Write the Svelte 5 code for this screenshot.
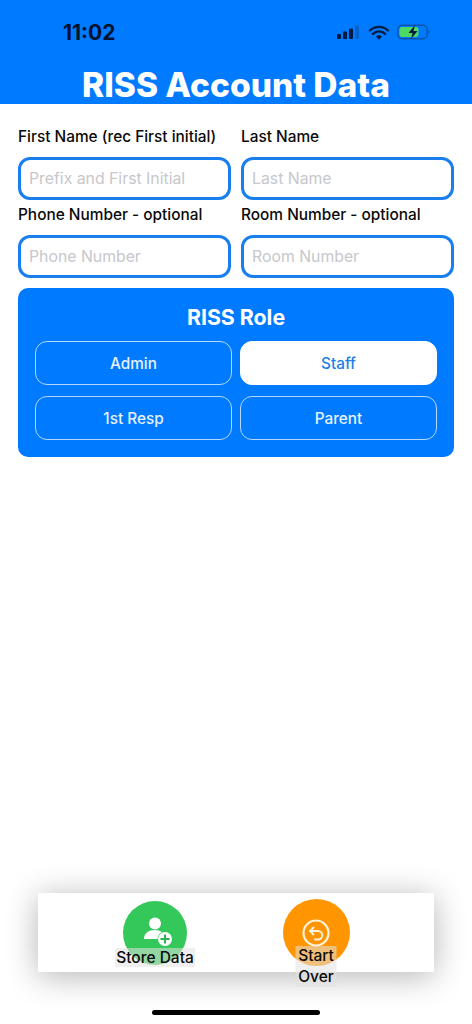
<script>
  // form fields, two per row
  const fields = [
    { label: "First Name (rec First initial)", placeholder: "Prefix and First Initial" },
    { label: "Last Name", placeholder: "Last Name" },
    { label: "Phone Number - optional", placeholder: "Phone Number" },
    { label: "Room Number - optional", placeholder: "Room Number" }
  ];
  const roles = ["Admin", "Staff", "1st Resp", "Parent"];
  let role = $state("Staff");
</script>

<div class="page">
  <header class="header">
    <div class="status">
      <span class="time">11:02</span>
      <div class="status-icons">
        <svg width="24" height="14" viewBox="0 0 24 14">
          <rect x="0" y="9" width="4" height="5" rx="1" fill="#001a40" />
          <rect x="6" y="6.5" width="4" height="7.5" rx="1" fill="#001a40" />
          <rect x="12" y="3.5" width="4" height="10.5" rx="1" fill="#001a40" />
          <rect x="18" y="0.5" width="4" height="13.5" rx="1" fill="#0a62cc" />
        </svg>
        <svg width="22" height="15" viewBox="0 0 22 15">
          <path d="M2 5.5a13 13 0 0 1 18 0M5 8.8a8.6 8.6 0 0 1 12 0" fill="none" stroke="#001a40" stroke-width="2.4" stroke-linecap="round" />
          <path d="M8 11.6a4.2 4.2 0 0 1 6 0L11 14.8z" fill="#001a40" />
        </svg>
        <svg width="34" height="16" viewBox="0 0 34 16">
          <rect x="0.8" y="1.3" width="29.4" height="13.4" rx="4" fill="none" stroke="#0a55b0" stroke-width="1.4" />
          <rect x="2.5" y="3" width="19" height="10" rx="2.4" fill="#4cd964" />
          <path d="M31.6 6v4a2 2 0 0 0 1.2-2 2 2 0 0 0-1.2-2z" fill="#0a55b0" />
          <path d="M18 1 11.5 9h4l-1.500 6L20.500 7h-4z" fill="#001a40" />
        </svg>
      </div>
    </div>
    <h1>RISS Account Data</h1>
  </header>

  <main class="content">
    <div class="fields">
      {#each fields as f}
        <label class="field">
          <span>{f.label}</span>
          <input type="text" placeholder={f.placeholder} />
        </label>
      {/each}
    </div>

    <section class="roles">
      <h2>RISS Role</h2>
      <div class="role-grid">
        {#each roles as r}
          <button class="role" class:active={role === r} onclick={() => (role = r)}>{r}</button>
        {/each}
      </div>
    </section>
  </main>

  <nav class="bar">
    <button class="tab">
      <span class="circle green">
        <svg width="32" height="32" viewBox="0 0 32 32">
          <circle cx="14" cy="8.500" r="6" fill="#fff" />
          <path d="M3 24c0-6 5-9 11-9 3 0 5 .7 7 2-3 1.500-4.500 4-4.500 7z" fill="#fff" />
          <circle cx="24" cy="24" r="7" fill="#fff" />
          <path d="M24 20.200v7.600M20.200 24h7.600" stroke="#2fb350" stroke-width="2" stroke-linecap="round" />
        </svg>
      </span>
      <span class="tab-label">Store Data</span>
    </button>
    <button class="tab">
      <span class="circle orange">
        <svg width="30" height="30" viewBox="0 0 30 30">
          <circle cx="15" cy="15" r="12.500" fill="none" stroke="#fff3dd" stroke-width="2.200" />
          <path d="M12.500 9.500 9 13l3.500 3.500M9.500 13H17a4 4 0 0 1 0 8.500h-3" fill="none" stroke="#fff3dd" stroke-width="2" stroke-linecap="round" stroke-linejoin="round" />
        </svg>
      </span>
      <span class="tab-label narrow">Start Over</span>
    </button>
  </nav>

  <div class="home"></div>
</div>

<style>
  :global(body) {
    margin: 0;
    background: #fff;
  }

  .page {
    display: flex;
    flex-direction: column;
    height: 1024px;
    font-family: Inter, "Liberation Sans", sans-serif;
    overflow: hidden;
  }

  /* header and status bar */
  .header {
    height: 104px;
    flex: none;
    background: #007aff;
    color: #fff;
    box-sizing: border-box;
    overflow: hidden;
  }

  .status {
    display: flex;
    justify-content: space-between;
    align-items: center;
    height: 24px;
    padding: 20px 41px 0 63px;
  }

  .time {
    font-size: 21px;
    font-weight: 700;
    color: #00122e;
  }

  .status-icons {
    display: flex;
    align-items: center;
    gap: 7px;
  }

  h1 {
    margin: 21px 0 0;
    font-size: 33.500px;
    line-height: 40px;
    font-weight: 800;
    text-align: center;
  }

  /* form */
  .content {
    padding: 0 18px;
  }

  .fields {
    display: grid;
    grid-template-columns: 213px 213px;
    column-gap: 10px;
    row-gap: 5px;
    padding-top: 23px;
  }

  .field {
    display: flex;
    flex-direction: column;
    gap: 10px;
  }

  .field span {
    font-size: 15.400px;
    line-height: 20px;
    font-weight: 500;
    color: #0a0a0a;
    white-space: nowrap;
  }

  input {
    width: 100%;
    height: 43px;
    box-sizing: border-box;
    padding: 0 8px;
    border: 3px solid #1a7fee;
    border-radius: 12px;
    background: #fff;
    font: 400 15.800px Inter, "Liberation Sans", sans-serif;
    outline: none;
  }

  input::placeholder {
    color: #c7c7cc;
  }

  /* role picker */
  .roles {
    margin-top: 10px;
    height: 169px;
    box-sizing: border-box;
    padding: 17px 17px 0;
    background: #007aff;
    border-radius: 10px;
  }

  h2 {
    margin: 0;
    font-size: 21.300px;
    line-height: 24px;
    font-weight: 700;
    color: #fff;
    text-align: center;
  }

  .role-grid {
    display: grid;
    grid-template-columns: 197px 197px;
    grid-auto-rows: 44px;
    column-gap: 8px;
    row-gap: 11px;
    margin-top: 12px;
  }

  .role {
    border: 1px solid #b5d8ff;
    border-radius: 12px;
    background: transparent;
    color: #e6f2ff;
    font: 500 15.300px Inter, "Liberation Sans", sans-serif;
    padding: 0;
  }

  .role.active {
    background: #fff;
    border-color: #fff;
    color: #1a7fe8;
  }

  /* bottom bar */
  .bar {
    display: flex;
    gap: 39px;
    height: 79px;
    width: 396px;
    box-sizing: border-box;
    flex: none;
    margin: auto 0 38px 38px;
    padding-left: 56px;
    background: #fff;
    box-shadow: 0 4px 32px rgba(0, 0, 0, 0.3);
  }

  .tab {
    position: relative;
    width: 122px;
    padding: 0;
    border: 0;
    background: none;
    display: flex;
    flex-direction: column;
    align-items: center;
    font-family: inherit;
  }

  .circle {
    display: flex;
    align-items: center;
    justify-content: center;
    border-radius: 50%;
  }

  .green {
    width: 64px;
    height: 64px;
    margin-top: 8px;
    background: #34c759;
    padding: 0 0 5px 4px;
    box-sizing: border-box;
  }

  .orange {
    width: 67px;
    height: 67px;
    margin-top: 6px;
    background: #ff9500;
    box-sizing: border-box;
  }

  .tab-label {
    position: absolute;
    left: 50%;
    top: 55px;
    transform: translateX(-50%);
    padding: 0 1px;
    font-size: 15.500px;
    line-height: 19px;
    font-weight: 500;
    color: #0a0a0a;
    text-align: center;
    white-space: nowrap;
    background: rgba(225, 225, 225, 0.55);
  }

  .tab-label.narrow {
    white-space: normal;
    width: 39px;
    top: 53px;
    line-height: 20.500px;
    padding: 0 1px;
  }

  .home {
    flex: none;
    width: 168px;
    height: 5px;
    margin: 0 0 9px 152px;
    border-radius: 3px;
    background: #000;
  }
</style>
